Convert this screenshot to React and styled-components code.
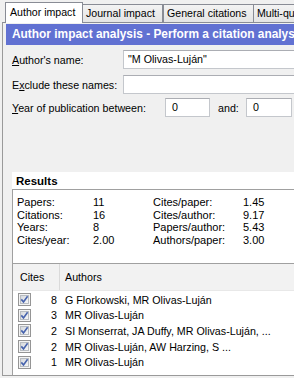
import React from 'react';
import styled, { createGlobalStyle } from 'styled-components';

const GlobalStyle = createGlobalStyle`
  html, body { margin: 0; padding: 0; background: #f0f0f0; }
  body {
    font-family: "Liberation Sans", Arial, sans-serif;
    font-size: 10.7px;
    color: #000;
    overflow: hidden;
  }
`;

const Root = styled.div`
  width: 294px;
  height: 378px;
  overflow: hidden;
  padding: 2px 0 0 2px;
  box-sizing: border-box;
  background: #f0f0f0;
`;

const TabStrip = styled.div`
  display: flex;
  align-items: flex-end;
  height: 20px;
  width: 420px;
  padding-left: 3px;
  box-sizing: border-box;
  position: relative;
  z-index: 2;
`;

const Tab = styled.div`
  box-sizing: border-box;
  flex: none;
  width: ${p => p.$w}px;
  height: ${p => (p.$active ? 21 : 18)}px;
  margin-bottom: ${p => (p.$active ? -1 : 0)}px;
  border: 1px solid #898c95;
  border-bottom: none;
  border-left-width: ${p => (p.$active || p.$first ? 1 : 0)}px;
  background: ${p => (p.$active ? '#ffffff' : 'linear-gradient(#f3f3f3, #e4e4e4)')};
  padding-left: ${p => (p.$active ? 4 : 3)}px;
  line-height: ${p => (p.$active ? 19 : 17)}px;
  font-size: 10.6px;
  white-space: nowrap;
  overflow: hidden;
`;

const Pane = styled.div`
  box-sizing: border-box;
  width: 340px;
  height: 354px;
  border: 1px solid #9a9a9a;
  border-top-color: #898c95;
  background: #f0f0f0;
  display: flex;
  flex-direction: column;
`;

const Banner = styled.div`
  margin: 1px 0 0 3px;
  height: 21px;
  background: #6171d2;
  color: #fff;
  font-weight: bold;
  font-size: 11.9px;
  line-height: 21px;
  padding-left: 6px;
  white-space: nowrap;
  overflow: hidden;
`;

const Form = styled.div`
  margin-top: 5px;
  padding-left: 9px;
  display: flex;
  flex-direction: column;
`;

const FieldRow = styled.div`
  display: flex;
  align-items: center;
  height: 19px;
  margin-top: ${p => p.$gap || 0}px;
  white-space: nowrap;
`;

const Label = styled.div`
  width: ${p => p.$w}px;
  margin-left: ${p => p.$ml || 0}px;
  flex: none;
`;

const TextBox = styled.div`
  box-sizing: border-box;
  width: ${p => p.$w}px;
  flex: none;
  height: 19px;
  background: #fff;
  border: 1px solid #c4c7cc;
  border-top-color: #abadb3;
  padding-left: ${p => p.$pad || 4}px;
  line-height: 17px;
  white-space: nowrap;
  overflow: hidden;
`;

const Results = styled.div`
  margin: 55px 0 0 9px;
  flex: 1;
  min-height: 0;
  display: flex;
  flex-direction: column;
`;

const ResultsHeader = styled.div`
  height: 17px;
  background: #fff;
  border-bottom: 1px solid #a0a0a0;
  font-weight: bold;
  font-size: 11.5px;
  line-height: 18px;
  padding-left: 4px;
`;

const StatsBox = styled.div`
  box-sizing: border-box;
  height: 73px;
  background: #fff;
  border-left: 1px solid #a0a0a0;
  padding: 6px 0 0 4px;
  display: grid;
  grid-template-columns: 76px 60px 90px 1fr;
  grid-auto-rows: 12.7px;
  align-content: start;
  line-height: 12.7px;
  font-size: 11px;
  white-space: nowrap;
`;

const ListBox = styled.div`
  flex: 1;
  min-height: 0;
  background: #fff;
  border-top: 1px solid #a0a0a0;
  border-left: 1px solid #a0a0a0;
  overflow: hidden;
`;

const ListHeader = styled.div`
  display: flex;
  height: 26px;
  background: #f2f2f2;
  border-bottom: 1px solid #e8e8e8;
`;

const HeaderCell = styled.div`
  box-sizing: border-box;
  width: ${p => (p.$w ? `${p.$w}px` : 'auto')};
  flex: ${p => (p.$w ? 'none' : 1)};
  padding-left: ${p => p.$pad}px;
  line-height: 27px;
  border-right: ${p => (p.$w ? '1px solid #dadada' : 'none')};
`;

const Rows = styled.div`
  padding-top: 1px;
`;

const Row = styled.div`
  display: flex;
  align-items: center;
  height: 15.6px;
  white-space: nowrap;
`;

const CheckWrap = styled.span`
  display: flex;
  width: 13px;
  height: 13px;
  margin-left: 5px;
  flex: none;
`;

const Count = styled.span`
  width: 26px;
  flex: none;
  text-align: right;
`;

const AuthorsText = styled.span`
  padding-left: 8px;
`;

function CheckIcon() {
  return (
    <CheckWrap>
      <svg width="13" height="13" viewBox="0 0 13 13">
        <defs>
          <linearGradient id="cbg" x1="0" y1="0" x2="1" y2="1">
            <stop offset="0" stopColor="#d4d7db" />
            <stop offset="1" stopColor="#f7f8f9" />
          </linearGradient>
        </defs>
        <rect x="0.5" y="0.5" width="12" height="12" fill="#f4f4f4" stroke="#959595" />
        <rect x="2.5" y="2.5" width="8" height="8" fill="url(#cbg)" stroke="#b8bcc1" />
        <path d="M3.3 6.4 L5.5 8.9 L9.6 3.3" fill="none" stroke="#4763ad" strokeWidth="1.6" />
      </svg>
    </CheckWrap>
  );
}

const stats = [
  ['Papers:', '11', 'Cites/paper:', '1.45'],
  ['Citations:', '16', 'Cites/author:', '9.17'],
  ['Years:', '8', 'Papers/author:', '5.43'],
  ['Cites/year:', '2.00', 'Authors/paper:', '3.00'],
];

const rows = [
  ['8', 'G Florkowski, MR Olivas-Luján'],
  ['3', 'MR Olivas-Luján'],
  ['2', 'SI Monserrat, JA Duffy, MR Olivas-Luján, ...'],
  ['2', 'MR Olivas-Luján, AW Harzing, S ...'],
  ['1', 'MR Olivas-Luján'],
];

export default function App() {
  return (
    <Root>
      <GlobalStyle />
      <TabStrip>
        <Tab $active $w={78}>Author impact</Tab>
        <Tab $w={80}>Journal impact</Tab>
        <Tab $w={91} $first>General citations</Tab>
        <Tab $w={90}>Multi-query center</Tab>
      </TabStrip>
      <Pane>
        <Banner>Author impact analysis - Perform a citation analysis for one or more authors</Banner>
        <Form>
          <FieldRow>
            <Label $w={111}><u>A</u>uthor's name:</Label>
            <TextBox $w={220}>"M Olivas-Luján"</TextBox>
          </FieldRow>
          <FieldRow $gap={6}>
            <Label $w={111}>E<u>x</u>clude these names:</Label>
            <TextBox $w={220}></TextBox>
          </FieldRow>
          <FieldRow $gap={4}>
            <Label $w={153}><u>Y</u>ear of publication between:</Label>
            <TextBox $w={45} $pad={6}>0</TextBox>
            <Label $w={28} $ml={8}>and:</Label>
            <TextBox $w={46} $pad={6}>0</TextBox>
          </FieldRow>
        </Form>
        <Results>
          <ResultsHeader>Results</ResultsHeader>
          <StatsBox>
            {stats.map(r => r.map((c, i) => <span key={r[0] + i}>{c}</span>))}
          </StatsBox>
          <ListBox>
            <ListHeader>
              <HeaderCell $w={47} $pad={7}>Cites</HeaderCell>
              <HeaderCell $pad={5}>Authors</HeaderCell>
            </ListHeader>
            <Rows>
              {rows.map((r, i) => (
                <Row key={i}>
                  <CheckIcon />
                  <Count>{r[0]}</Count>
                  <AuthorsText>{r[1]}</AuthorsText>
                </Row>
              ))}
            </Rows>
          </ListBox>
        </Results>
      </Pane>
    </Root>
  );
}
